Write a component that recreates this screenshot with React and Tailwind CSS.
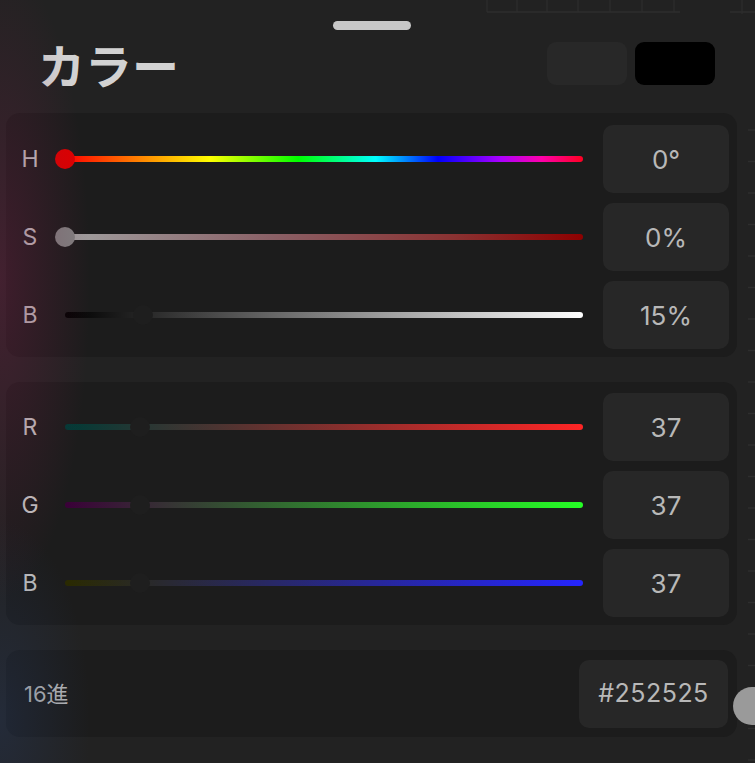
import React from "react";

const labelCls = "w-[48px] text-center text-[23px] leading-none text-[#c2c2c2] font-['Inter',sans-serif]";
const boxCls = "ml-[20px] w-[126px] h-[68px] rounded-[10px] bg-[#272727] flex items-center justify-center text-[26px] text-[#b8b8b8] font-['Inter',sans-serif]";

function Row({ label, trackCls, knobLeft, knobCls, value }) {
  return (
    <div className="flex items-center h-[68px]">
      <div className={labelCls}>{label}</div>
      <div className="ml-[11px] w-[518px] h-[20px] relative flex items-center">
        <div className={"w-full h-[6px] rounded-full " + trackCls} />
        {knobCls && (
          <div
            className={"absolute top-0 w-[20px] h-[20px] rounded-full " + knobCls}
            style={{ left: knobLeft - 10 }}
          />
        )}
      </div>
      <div className={boxCls}>{value}</div>
    </div>
  );
}

export default function App() {
  return (
    <div className="relative w-[755px] h-[763px] overflow-hidden bg-[#222222]">
      {/* background canvas grid (behind the sheet) */}
      <svg className="absolute top-0 left-[480px]" width="275" height="20">
        <line x1="7" y1="12" x2="200" y2="12" stroke="#2e2e2e" strokeWidth="1.5" />
        {[7, 37, 67, 98, 130, 162, 194].map((x) => (
          <line key={x} x1={x} y1="0" x2={x} y2="12" stroke="#2e2e2e" strokeWidth="1.2" />
        ))}
        <line x1="250" y1="12" x2="275" y2="12" stroke="#2e2e2e" strokeWidth="1.5" />
        <line x1="262" y1="0" x2="262" y2="14" stroke="#2e2e2e" strokeWidth="1.2" />
      </svg>
      <svg className="absolute top-0 right-0" width="10" height="763">
        {Array.from({ length: 21 }).map((_, i) => (
          <line key={i} x1="3" y1={130 + i * 31.5} x2="10" y2={130 + i * 31.5} stroke="#2e2e2e" strokeWidth="1.5" />
        ))}
      </svg>

      <div className="relative flex flex-col">
        {/* grabber */}
        <div className="pt-[21px] pl-[333px]">
          <div className="w-[78px] h-[9px] rounded-full bg-[#c8c8c8]" />
        </div>

        {/* header */}
        <div className="mt-[12px] h-[43px] flex items-center pl-[38px] pr-[40px]">
          <div className="text-[47px] leading-none font-bold text-[#d2d2d2] font-['Noto_Sans_CJK_JP',sans-serif]">
            カラー
          </div>
          <div className="ml-auto flex gap-[8px]">
            <div className="w-[80px] h-[43px] rounded-[9px] bg-[#282828]" />
            <div className="w-[80px] h-[43px] rounded-[9px] bg-[#000000]" />
          </div>
        </div>

        {/* HSB panel */}
        <div className="mt-[28px] ml-[6px] w-[731px] rounded-[14px] bg-[#1c1c1c] pt-[12px] pb-[8px] pr-[8px] flex flex-col gap-[10px]">
          <Row
            label="H"
            trackCls="bg-[linear-gradient(to_right,#ff0000,#ffff00_28%,#00ff00_45%,#00ffff_60%,#0000ff_72%,#aa00ff_84%,#ff00aa_92%,#ff0022)]"
            knobLeft={0}
            knobCls="bg-[#dd0000]"
            value="0°"
          />
          <Row
            label="S"
            trackCls="bg-[linear-gradient(to_right,#a0a0a0,#8a6066_40%,#8a3232_75%,#8e0000)]"
            knobLeft={0}
            knobCls="bg-[#808080]"
            value="0%"
          />
          <Row
            label="B"
            trackCls="bg-[linear-gradient(to_right,#000000,#ffffff)]"
            knobLeft={78}
            knobCls="bg-[#1e1e1e]"
            value="15%"
          />
        </div>

        {/* RGB panel */}
        <div className="mt-[25px] ml-[6px] w-[731px] rounded-[14px] bg-[#1c1c1c] pt-[11px] pb-[8px] pr-[8px] flex flex-col gap-[10px]">
          <Row
            label="R"
            trackCls="bg-[linear-gradient(to_right,#003a36,#ff2525)]"
            knobLeft={75}
            knobCls="bg-[#1e1e1e]"
            value="37"
          />
          <Row
            label="G"
            trackCls="bg-[linear-gradient(to_right,#3a0038,#25ff25)]"
            knobLeft={75}
            knobCls="bg-[#1e1e1e]"
            value="37"
          />
          <Row
            label="B"
            trackCls="bg-[linear-gradient(to_right,#2a2a00,#2525ff)]"
            knobLeft={75}
            knobCls="bg-[#1e1e1e]"
            value="37"
          />
        </div>

        {/* hex panel */}
        <div className="mt-[25px] ml-[6px] w-[731px] h-[87px] rounded-[14px] bg-[#1c1c1c] pr-[9px] flex items-center">
          <div className="pl-[18px] text-[22px] leading-none text-[#b8b8b8] font-['Inter','Noto_Sans_CJK_JP',sans-serif]">
            16進
          </div>
          <div className="ml-auto w-[149px] h-[68px] rounded-[10px] bg-[#272727] flex items-center justify-center text-[25px] tracking-[0.5px] text-[#b8b8b8] font-['Inter',sans-serif]">
            #252525
          </div>
        </div>
      </div>

      {/* left edge glow */}
      <div className="pointer-events-none absolute inset-0 bg-[radial-gradient(ellipse_90px_320px_at_0px_280px,rgba(120,30,70,0.38),transparent),radial-gradient(ellipse_90px_200px_at_0px_720px,rgba(40,60,100,0.35),transparent)]" />

      {/* scroll knob */}
      <div className="absolute left-[733px] top-[687px] w-[40px] h-[38px] rounded-full bg-[#9a9a9a]" />
    </div>
  );
}
